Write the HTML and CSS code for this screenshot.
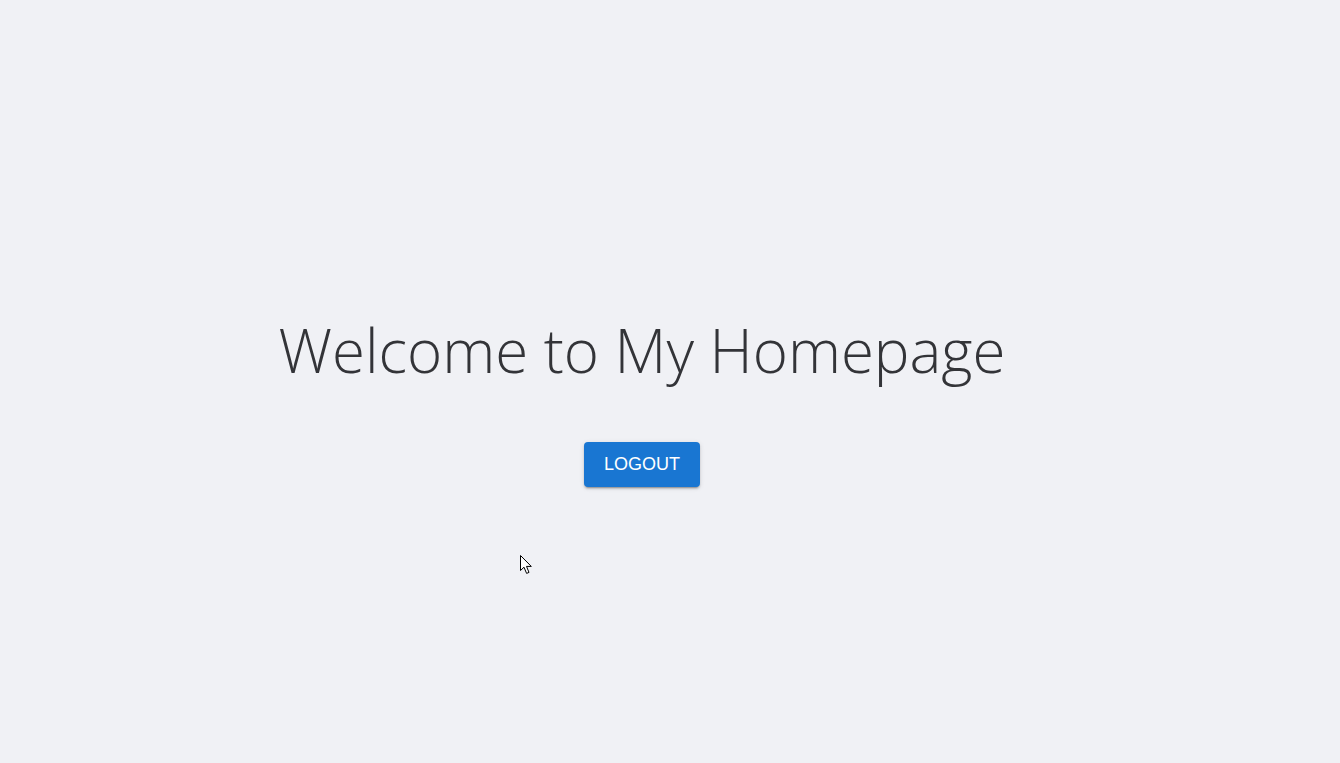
FILE: index.html
```html
<!DOCTYPE html>
<html lang="en">
<head>
<meta charset="utf-8">
<title>Home</title>
<link rel="stylesheet" href="styles.css">
</head>
<body>
<main class="page">
  <h1 class="title">Welcome to My Homepage</h1>
  <button class="logout" type="button">LOGOUT</button>
</main>
<svg class="cursor" width="14" height="20" viewBox="0 0 14 20" aria-hidden="true">
  <path d="M0.5 0.5 L0.5 15.5 L4 12.2 L6.6 18.4 L9 17.4 L6.5 11.4 L11.3 11.4 Z" fill="#fff" stroke="#000" stroke-width="1" stroke-linejoin="miter"/>
</svg>
</body>
</html>
```

FILE: styles.css
```css
html, body {
  margin: 0;
  padding: 0;
}
body {
  background: #f0f1f5;
  min-height: 100vh;
  font-family: "Liberation Sans", Arial, sans-serif;
}
.page {
  width: 1284px;
  display: flex;
  flex-direction: column;
  align-items: center;
  padding-top: 308px;
}
.title {
  margin: 0;
  font-family: "Open Sans", "Noto Sans", sans-serif;
  font-weight: 350;
  font-size: 60px;
  line-height: 84px;
  color: #333438;
  letter-spacing: 0;
}
.logout {
  margin-top: 50px;
  width: 116px;
  height: 45px;
  border: none;
  border-radius: 4px;
  background: #1976d2;
  color: #fff;
  font-family: "Liberation Sans", Arial, sans-serif;
  font-size: 18px;
  font-weight: 400;
  padding: 0;
  box-shadow: 0 3px 1px -2px rgba(0,0,0,0.2), 0 2px 2px 0 rgba(0,0,0,0.14), 0 1px 5px 0 rgba(0,0,0,0.12);
  cursor: pointer;
}
.cursor {
  position: absolute;
  left: 520px;
  top: 555px;
}
```
